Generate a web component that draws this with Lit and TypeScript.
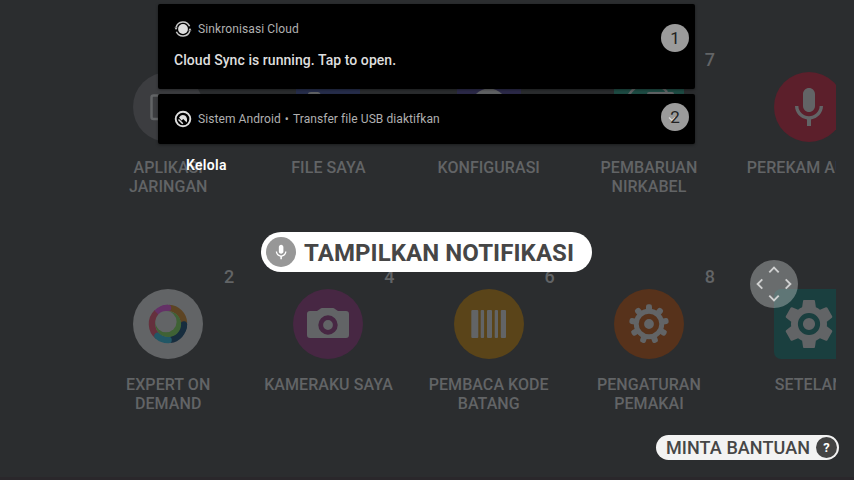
import { LitElement, html, css, svg } from "lit";
import { customElement, property } from "lit/decorators.js";

const MIC = svg`<path d="M12 14c1.66 0 3-1.34 3-3V5c0-1.66-1.34-3-3-3S9 3.34 9 5v6c0 1.66 1.34 3 3 3zM17.3 11c0 3-2.54 5.1-5.3 5.1S6.700 14 6.700 11H5c0 3.410 2.720 6.230 6 6.720V21h2v-3.280c3.280-.480 6-3.300 6-6.720z"/>`;

const gearTeeth = (n: number) =>
  Array.from({ length: n }, (_, i) => svg`<rect x="32" y="15.200" width="6" height="11" rx="2.200" transform="rotate(${(i * 360) / n} 35 35)"/>`);

const icons: Record<string, unknown> = {
  network: svg`<circle cx="35" cy="35" r="35" fill="#3c3d40"/><rect x="18.500" y="23.500" width="33" height="23.500" rx="2" fill="none" stroke="#626466" stroke-width="2.500"/>`,
  files: svg`<rect x="3" width="64" height="70" rx="8" fill="#272e4c"/><path fill="#626466" d="M15 23v-1q0-2 3-2h7q2 0 3 3z"/>`,
  config: svg`<rect x="3" width="64" height="70" rx="8" fill="#2c2a49"/><circle cx="35" cy="35" r="18.500" fill="#626466"/>`,
  update: svg`<rect width="70" height="70" fill="#1e4c44"/><path d="M14 24q4-6 8-9M47 15q4 2 6 5" fill="none" stroke="#626466" stroke-width="2.500"/><path fill="#626466" d="M33 24v-2q0-2 2-2h23q2 0 2 2v2z"/>`,
  recorder: svg`<circle cx="35" cy="35" r="35" fill="#5c1f2b"/><g transform="translate(11 12) scale(2)" fill="#626466">${MIC}</g>`,
  expert: svg`<circle cx="35" cy="35" r="35" fill="#626466"/>
    <g fill="none" stroke-width="6.500">
      <path stroke="#5d4423" d="M36 19A16 16 0 0 1 51 34"/>
      <path stroke="#65303d" d="M25 47.500A16 16 0 0 1 24 23.400"/>
      <path stroke="#643166" d="M23.700 23.700A16 16 0 0 1 35 19"/>
      <path stroke="#643166" stroke-linecap="round" d="M30 19.800A16 16 0 0 1 35 19"/>
      <path stroke="#172d3e" d="M50.900 35.500A16 16 0 0 1 37 50.900"/>
      <path stroke="#172d3e" stroke-linecap="round" d="M50.900 35.500A16 16 0 0 1 50 40"/>
      <path stroke="#215766" stroke-linecap="round" d="M24.500 47A16 16 0 0 0 35.500 51"/>
    </g>
    <circle cx="35.300" cy="35.300" r="12.800" fill="#3f6235"/><circle cx="33" cy="32.700" r="10.600" fill="#626466"/>`,
  camera: svg`<circle cx="35" cy="35" r="35" fill="#472743"/><path fill="#626466" d="M17 22h7l3-2q1-1 2-1h11q1 0 2 1l3 2h8q3 0 3 3v21q0 3-3 3H17q-3 0-3-3V25q0-3 3-3z"/><circle cx="35" cy="36" r="7.300" fill="#626466" stroke="#472743" stroke-width="4.800"/>`,
  barcode: svg`<circle cx="35" cy="35" r="35" fill="#5a4419"/><g fill="#626466"><rect x="17.300" y="21" width="7" height="28" rx="1"/><rect x="26.700" y="21" width="3.400" height="28" rx="1"/><rect x="33" y="21" width="5" height="28" rx="1"/><rect x="40.700" y="21" width="3.300" height="28" rx="1"/><rect x="46.800" y="21" width="5.200" height="28" rx="1"/></g>`,
  user: svg`<circle cx="35" cy="35" r="35" fill="#57321b"/><g fill="#626466">${gearTeeth(9)}<circle cx="35" cy="35" r="15.200"/></g><circle cx="35" cy="35" r="7.600" fill="#626466" stroke="#57321b" stroke-width="5.400"/>`,
  settings: svg`<rect width="70" height="70" rx="7" fill="#1a3f3f"/><g transform="translate(6.200 6.200) scale(2.400)"><path fill="#626466" d="M19.430 12.980c.040-.320.070-.640.070-.980s-.030-.660-.070-.980l2.110-1.650c.190-.150.240-.420.120-.640l-2-3.460c-.120-.220-.390-.300-.610-.220l-2.490 1c-.520-.400-1.080-.730-1.690-.980l-.380-2.650C14.460 2.180 14.250 2 14 2h-4c-.250 0-.460.180-.490.420l-.380 2.650c-.610.250-1.170.590-1.690.980l-2.490-1c-.230-.090-.490 0-.610.220l-2 3.460c-.130.220-.070.490.120.640l2.110 1.650c-.040.320-.070.650-.070.980s.030.660.070.980l-2.110 1.650c-.190.150-.240.420-.120.640l2 3.460c.120.220.390.300.610.220l2.490-1c.520.400 1.080.730 1.690.980l.380 2.650c.030.240.240.420.490.420h4c.250 0 .460-.180.490-.420l.380-2.650c.610-.250 1.170-.590 1.690-.980l2.490 1c.230.090.490 0 .610-.220l2-3.460c.120-.220.070-.490-.120-.640z"/></g><circle cx="35" cy="35" r="8.600" fill="#626466" stroke="#1a3f3f" stroke-width="5"/>`,
};

interface App { icon: string; lines: string[]; num?: number }

const APPS: App[] = [
  { icon: "network", lines: ["APLIKASI", "JARINGAN"] },
  { icon: "files", lines: ["FILE SAYA"] },
  { icon: "config", lines: ["KONFIGURASI"] },
  { icon: "update", lines: ["PEMBARUAN", "NIRKABEL"], num: 7 },
  { icon: "recorder", lines: ["PEREKAM AUDIO"] },
  { icon: "expert", lines: ["EXPERT ON", "DEMAND"], num: 2 },
  { icon: "camera", lines: ["KAMERAKU SAYA"], num: 4 },
  { icon: "barcode", lines: ["PEMBACA KODE", "BATANG"], num: 6 },
  { icon: "user", lines: ["PENGATURAN", "PEMAKAI"], num: 8 },
  { icon: "settings", lines: ["SETELAN"] },
];

@customElement("app-tile")
class AppTile extends LitElement {
  @property({ attribute: false }) app!: App;
  static styles = css`
    :host { position: relative; display: flex; flex-direction: column; align-items: center; padding-top: 33px; box-sizing: border-box; }
    svg { display: block; width: 70px; height: 70px; }
    .label { margin-top: 16px; font-size: 16px; font-weight: 500; line-height: 19px; letter-spacing: .06px; text-align: center; white-space: nowrap; }
    .num { position: absolute; top: 10px; left: 120px; width: 42px; text-align: center; font-size: 18px; line-height: 22px; font-weight: 500; }
  `;
  render() {
    const { icon, lines, num } = this.app;
    return html`<svg viewBox="0 0 70 70">${icons[icon]}</svg>
      <div class="label">${lines.map((l) => html`<div>${l}</div>`)}</div>
      ${num ? html`<span class="num">${num}</span>` : ""}`;
  }
}

@customElement("app-root")
class AppRoot extends LitElement {
  static styles = css`
    :host { display: block; position: relative; width: 854px; height: 480px; overflow: hidden; background: #2b2d2f; color: #626466; font-family: Roboto, sans-serif; box-sizing: border-box; border-bottom: 3px solid #2a272b; }
    .stage { width: 836px; height: 477px; overflow: hidden; box-sizing: border-box; padding: 39px 0 0 88.1px; }
    .grid { display: grid; grid-template-columns: repeat(5, 160.25px); grid-auto-rows: 217px; }
    .shade { position: absolute; top: 4px; left: 158px; width: 537px; display: flex; flex-direction: column; gap: 5px; }
    .card { position: relative; box-sizing: border-box; background: #000; border-radius: 2px; padding: 16px; box-shadow: 0 1px 3px rgba(0,0,0,.4); }
    .first { height: 85px; }
    .second { height: 50px; }
    .head { display: flex; align-items: center; gap: 6px; height: 18px; font-size: 12px; letter-spacing: .11px; color: #b0b0b0; }
    .second .head { letter-spacing: .08px; }
    .head svg { width: 18px; height: 18px; }
    .dot { margin: 0 -2px; }
    .title { margin-top: 13px; font-size: 14px; line-height: 18px; font-weight: 500; letter-spacing: .06px; color: #dedede; }
    .badge { position: absolute; right: 6px; width: 28px; height: 28px; border-radius: 50%; background: #9b9b9b; color: #222; font-size: 17px; line-height: 28px; text-align: center; }
    .digit { position: relative; }
    .first .badge { top: 20px; }
    .second .badge { top: 9px; }
    .check { position: absolute; left: 7px; top: 12px; width: 8px; height: 8px; }
    .manage { margin: 7px 0 0 28px; font-size: 14px; line-height: 18px; font-weight: 600; letter-spacing: .3px; color: #fff; }
    .command { position: absolute; left: 261px; top: 232px; width: 331px; height: 40px; border-radius: 20px; background: #fff; display: flex; align-items: center; gap: 8px; padding-left: 5px; box-sizing: border-box; color: #464646; font-size: 24px; font-weight: 700; letter-spacing: .08px; white-space: nowrap; }
    .command span { padding-top: 2px; }
    .command svg { width: 30px; height: 30px; flex: none; }
    .pad { position: absolute; left: 750px; top: 260px; width: 48px; height: 48px; }
    .help { position: absolute; left: 656px; top: 435px; width: 183px; height: 25px; border-radius: 13px; background: #f3f3f3; display: flex; align-items: center; justify-content: space-between; padding: 0 2px 0 10px; box-sizing: border-box; color: #464646; font-size: 18px; font-weight: 500; letter-spacing: .08px; white-space: nowrap; }
    .q { width: 21px; height: 21px; border-radius: 50%; background: #444; color: #fff; font-size: 13px; line-height: 21px; text-align: center; font-weight: 700; }
  `;
  render() {
    return html`
      <div class="stage"><div class="grid">${APPS.map((a) => html`<app-tile .app=${a}></app-tile>`)}</div></div>
      <div class="shade">
        <div class="card first">
          <div class="head">
            <svg viewBox="0 0 18 18"><circle cx="9" cy="9" r="4.900" fill="#dedede"/><path d="M2.100 7.200A7.200 7.200 0 0 1 15.600 6.200M15.900 10.800A7.200 7.200 0 0 1 2.400 11.800" fill="none" stroke="#c8c8c8" stroke-width="1.500"/><path d="M.5 7.500h3.200L2 10zM14.300 10.500h3.200L16 8z" fill="#c8c8c8"/></svg>
            <span>Sinkronisasi Cloud</span>
          </div>
          <div class="title">Cloud Sync is running. Tap to open.</div>
          <div class="badge"><span class="digit">1</span></div>
        </div>
        <div class="card second">
          <div class="head">
            <svg viewBox="0 0 18 18"><circle cx="9" cy="9" r="7.300" fill="none" stroke="#dedede" stroke-width="1.900"/><path d="M5 7.500Q7.500 4 11 5.600Q14 8 12.700 12.500L9.200 9L7.600 10.600z" fill="#dedede"/><path d="M4.500 9.500l4.300 4.200" stroke="#dedede" stroke-width="1.500"/></svg>
            <span>Sistem Android</span><span class="dot">•</span><span>Transfer file USB diaktifkan</span>
          </div>
          <div class="badge"><svg class="check" viewBox="0 0 8 8"><path d="M1 2.500l3 3L7 2.500" fill="none" stroke="#ddd" stroke-width="1.200"/></svg><span class="digit">2</span></div>
        </div>
        <div class="manage">Kelola</div>
      </div>
      <div class="command">
        <svg viewBox="0 0 30 30"><circle cx="15" cy="15" r="15" fill="#979797"/><g transform="translate(6 6.200) scale(.76)" fill="#fff">${MIC}</g></svg>
        <span>TAMPILKAN NOTIFIKASI</span>
      </div>
      <svg class="pad" viewBox="0 0 48 48"><circle cx="24" cy="24" r="24" fill="rgba(200,203,203,.4)"/><path d="M19.300 12.300L24 7.600l4.700 4.700M19.300 35.700l4.700 4.700l4.700-4.700M12.300 19.300L7.600 24l4.700 4.700M35.700 19.300l4.700 4.700l-4.700 4.700" fill="none" stroke="#d0d1d1" stroke-width="1.900"/></svg>
      <div class="help"><span>MINTA BANTUAN</span><span class="q">?</span></div>
    `;
  }
}
